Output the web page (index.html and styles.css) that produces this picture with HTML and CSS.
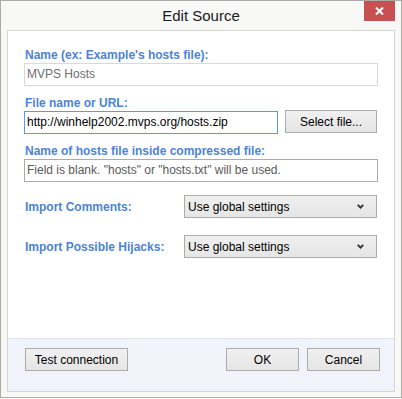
FILE: index.html
```html
<!DOCTYPE html>
<html>
<head>
<meta charset="utf-8">
<title>Edit Source</title>
<link rel="stylesheet" href="styles.css">
</head>
<body>
<div class="window">
  <div class="titlebar">
    <div class="title">Edit Source</div>
    <div class="close">
      <svg width="9" height="8" viewBox="0 0 9 8"><path d="M1 0.5 L8 7.5 M8 0.5 L1 7.5" stroke="#fff" stroke-width="2"/></svg>
    </div>
  </div>
  <div class="panel">
    <div class="content">
      <div class="field">
        <div class="label">Name (ex: Example's hosts file):</div>
        <div class="input disabled">MVPS Hosts</div>
      </div>
      <div class="field">
        <div class="label">File name or URL:</div>
        <div class="inline">
          <div class="input focus url">http://winhelp2002.mvps.org/hosts.zip</div>
          <div class="btn select-file">Select file...</div>
        </div>
      </div>
      <div class="field">
        <div class="label">Name of hosts file inside compressed file:</div>
        <div class="input hint">Field is blank. "hosts" or "hosts.txt" will be used.</div>
      </div>
      <div class="row first">
        <div class="label rowlabel">Import Comments:</div>
        <div class="dropdown"><span>Use global settings</span>
          <svg width="7" height="5" viewBox="0 0 7 5"><path d="M0.8 0.8 L3.5 3.6 L6.2 0.8" fill="none" stroke="#333" stroke-width="1.9"/></svg>
        </div>
      </div>
      <div class="row second">
        <div class="label rowlabel">Import Possible Hijacks:</div>
        <div class="dropdown"><span>Use global settings</span>
          <svg width="7" height="5" viewBox="0 0 7 5"><path d="M0.8 0.8 L3.5 3.6 L6.2 0.8" fill="none" stroke="#333" stroke-width="1.9"/></svg>
        </div>
      </div>
    </div>
    <div class="footer">
      <div class="btn test">Test connection</div>
      <div class="spacer"></div>
      <div class="btn ok">OK</div>
      <div class="btn cancel">Cancel</div>
    </div>
  </div>
</div>
</body>
</html>
```

FILE: styles.css
```css
html, body {
  margin: 0;
  padding: 0;
  background: #ffffff;
}
body {
  font-family: "Liberation Sans", Arial, sans-serif;
  font-size: 12px;
  color: #000;
}
.window {
  width: 402px;
  height: 398px;
  box-sizing: border-box;
  border: 1px solid #ababab;
  background: #f8f8f7;
  display: flex;
  flex-direction: column;
}
.titlebar {
  height: 29px;
  display: grid;
  grid-template-columns: 1fr auto 1fr;
  align-items: center;
}
.title {
  grid-column: 2;
  font-size: 15px;
  color: #1a1a1a;
  line-height: 20px;
  padding-top: 1px;
}
.close {
  grid-column: 3;
  justify-self: end;
  align-self: start;
  width: 31px;
  height: 20px;
  margin-right: 6px;
  background: #c75050;
  display: flex;
  align-items: center;
  justify-content: center;
}
.close svg { display: block; }
.panel {
  flex: 1;
  margin: 0 6px 5px;
  border: 1px solid #d5d5d5;
  background: #fff;
  display: flex;
  flex-direction: column;
}
.content {
  flex: 1;
  padding: 16px 16px 0;
  display: flex;
  flex-direction: column;
}
.label {
  color: #4c84d6;
  font-weight: bold;
  line-height: 16px;
  padding-left: 1px;
}
.field + .field { margin-top: 9px; }
.input {
  height: 23px;
  box-sizing: border-box;
  border: 1px solid #d9d9d9;
  padding: 0 2px;
  line-height: 21px;
  white-space: nowrap;
  overflow: hidden;
}
.input.disabled { color: #6d6d6d; }
.input.focus { border-color: #569de5; color: #000; }
.input.hint { border-color: #ababab; color: #5a5a5a; }
.inline {
  display: flex;
  align-items: flex-start;
}
.url { width: 254px; }
.btn {
  height: 23px;
  box-sizing: border-box;
  border: 1px solid #acacac;
  background: linear-gradient(#f0f0f0, #e5e5e5);
  display: flex;
  align-items: center;
  justify-content: center;
  white-space: nowrap;
}
.select-file {
  width: 92px;
  margin-left: 7px;
  margin-top: -1px;
}
.row {
  display: flex;
  align-items: center;
}
.row.first { margin-top: 13px; }
.row.second { margin-top: 17px; }
.rowlabel { width: 159px; }
.dropdown {
  flex: 1;
  margin-right: 1px;
  height: 23px;
  box-sizing: border-box;
  border: 1px solid #acacac;
  background: linear-gradient(#f0f0f0, #e5e5e5);
  display: flex;
  align-items: center;
  justify-content: space-between;
  padding: 0 12px 0 3px;
}
.dropdown svg { display: block; }
.footer {
  height: 43px;
  border-top: 1px solid #dde3ec;
  background: #f0f3fa;
  display: flex;
  align-items: flex-start;
  padding: 9px 14px 0 17px;
}
.spacer { flex: 1; }
.test { width: 103px; }
.ok { width: 73px; }
.cancel { width: 73px; margin-left: 8px; }
```
